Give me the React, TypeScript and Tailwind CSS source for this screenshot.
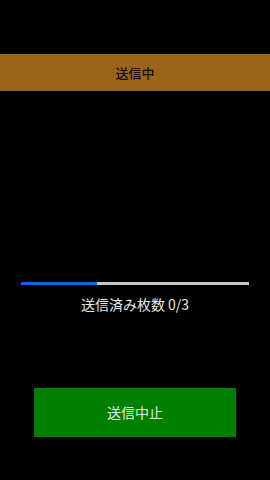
export default function App() {
  const sent = 0
  const total = 3
  return (
    <div className="w-[270px] h-[480px] bg-black flex flex-col" style={{ fontFamily: '"Noto Sans CJK JP", "Noto Sans", sans-serif' }}>
      <div className="mt-[54px] h-[37px] bg-[#9a6518] flex items-center justify-center text-[13px] font-medium text-[#111]">
        送信中
      </div>
      <div className="mt-[191px] mx-[21px] h-[3px] bg-[#c8c8c8] flex">
        <div className="w-1/3 bg-[#0a66e4]" />
      </div>
      <p className="mt-[9px] h-[20px] leading-[20px] text-center text-[14px] text-[#e6e6e6]">
        送信済み枚数 {sent}/{total}
      </p>
      <button type="button" className="mt-[74px] mx-auto w-[202px] h-[49px] bg-[#008000] text-[#e8e8e8] text-[14px] flex items-center justify-center">
        送信中止
      </button>
    </div>
  )
}
